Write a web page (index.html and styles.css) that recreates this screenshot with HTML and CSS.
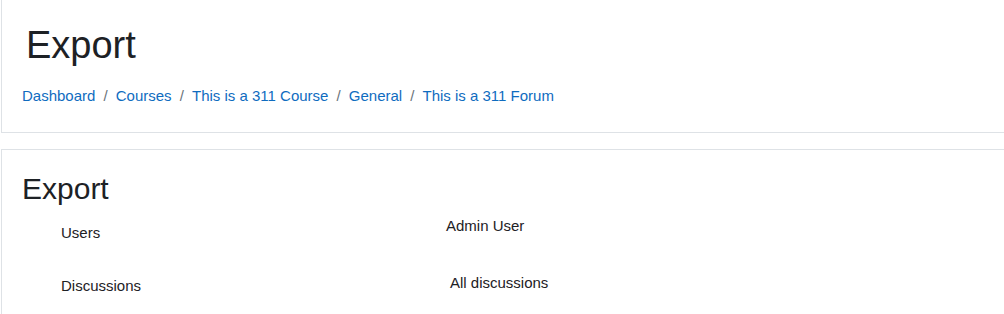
FILE: index.html
```
<html>
    <head>
        <title>Export</title>
        <link rel="stylesheet" href="styles.css">
    </head>
    <body>
        <div class="page">
            <header class="page-header card">
                <h1 class="page-title">Export</h1>
                <nav class="breadcrumb">
                    <a href="#">Dashboard</a>
                    <span class="sep">/</span>
                    <a href="#">Courses</a>
                    <span class="sep">/</span>
                    <a href="#">This is a 311 Course</a>
                    <span class="sep">/</span>
                    <a href="#">General</a>
                    <span class="sep">/</span>
                    <a href="#">This is a 311 Forum</a>
                </nav>
            </header>
            <div class="main card">
                <h2 class="main-title">Export</h2>
                <form id="exportform">
                    <div class="fitem">
                        <div class="fitem-label">Users</div>
                        <div class="fitem-value">Admin User</div>
                    </div>
                    <div class="fitem">
                        <div class="fitem-label low">Discussions</div>
                        <div class="fitem-value indent">All discussions</div>
                    </div>
                </form>
            </div>
        </div>
    </body>
</html>
```

FILE: styles.css
```
body {
    margin: 0;
    padding: 0;
    font-family: "Liberation Sans", Arial, sans-serif;
    font-size: 15px;
    line-height: 1.5;
    color: #1d2125;
    background-color: #fff;
}
.page {
    padding-left: 1px;
}
.card {
    border: 1px solid #dee2e6;
    border-right: 0;
    background-color: #fff;
}
.page-header {
    border-top: 0;
    padding: 23px 20px 25px 20px;
    margin-bottom: 16px;
}
.page-title {
    margin: 0 0 16px 4px;
    font-size: 38px;
    font-weight: 400;
    line-height: 1.2;
}
.breadcrumb {
    display: flex;
    gap: 8.1px;
    white-space: nowrap;
}
.breadcrumb a {
    color: #0f6cbf;
    text-decoration: none;
}
.breadcrumb .sep {
    color: #6a737b;
}
.main {
    padding: 21px 20px 40px 20px;
}
.main-title {
    margin: 0 0 8px 0;
    font-size: 30px;
    font-weight: 400;
    line-height: 1.2;
}
.fitem {
    display: flex;
    align-items: flex-start;
    height: 56px;
}
.fitem-label {
    width: 385px;
    padding: 7px 0 0 39px;
}
.fitem-label.low {
    padding-top: 4px;
}
.fitem-value.indent {
    padding-left: 4px;
    padding-top: 1px;
}
```
